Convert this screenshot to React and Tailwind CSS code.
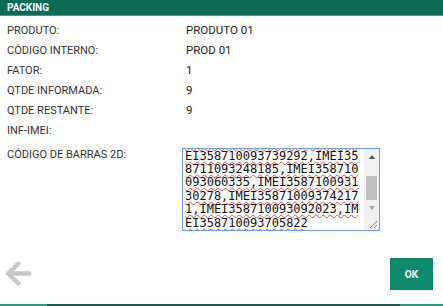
import React, { useEffect, useRef } from 'react';
import { FaArrowLeft } from 'react-icons/fa';

// ============================================
// PACKING DIALOG
// ============================================

const rows = [
  { label: 'PRODUTO:', value: 'PRODUTO 01' },
  { label: 'CÓDIGO INTERNO:', value: 'PROD 01' },
  { label: 'FATOR:', value: '1' },
  { label: 'QTDE INFORMADA:', value: '9' },
  { label: 'QTDE RESTANTE:', value: '9' },
  { label: 'INF-IMEI:', value: '' },
];

const barcodes =
  '8710093516240,IMEI358710093221097,IMEI358710093670354,IMEI358710093415862,IMEI358710093118803,IM' +
  'EI358710093739292,IMEI358711093248185,IMEI358710093060335,IMEI358710093130278,IMEI358710093742171,IMEI358710093092023,IMEI358710093705822\n';

// ============================================
// SCROLL COLUMN (classic scrollbar + resize grip)
// ============================================
const ScrollColumn = () => (
  <div className="w-[15px] h-full flex flex-col bg-[#f1f1f1]">
    <div className="h-[15px] flex items-center justify-center">
      <div className="w-0 h-0 border-x-[3.5px] border-x-transparent border-b-[4px] border-b-[#505050]" />
    </div>
    <div className="flex-1 px-[2px] pt-[12px]">
      <div className="h-[24px] bg-[#c1c1c1]" />
    </div>
    <div className="h-[15px] flex items-center justify-center">
      <div className="w-0 h-0 border-x-[3.5px] border-x-transparent border-t-[4px] border-t-[#a3a3a3]" />
    </div>
    <div className="h-[15px] flex items-end justify-end">
      <svg width="15" height="15" viewBox="0 0 15 15">
        <path d="M13 6 L6 13 M13 10 L10 13" stroke="#8a8a8a" strokeWidth="1" />
      </svg>
    </div>
  </div>
);

const App = () => {
  const areaRef = useRef(null);

  useEffect(() => {
    // keep the textarea scrolled to the same place as in the app
    if (areaRef.current) areaRef.current.scrollTop = 55;
  }, []);

  return (
    <div className="w-[443px] h-[306px] flex flex-col bg-white font-['Roboto',sans-serif] text-[#222]">
      {/* Header */}
      <div className="h-[16px] bg-[#0b6b55] border-b border-[#3f9a82] pl-[7px] flex items-center">
        <span className="text-[10px] font-bold text-white leading-none">PACKING</span>
      </div>

      {/* Body */}
      <div className="flex-1 pt-[5px] pl-[7px]">
        {rows.map((row) => (
          <div key={row.label} className="grid grid-cols-[175px_1fr] h-[20px] items-center">
            <span className="text-[11px] text-[#333]">{row.label}</span>
            <span className="pl-[4px] text-[11.5px] text-[#222]">{row.value}</span>
          </div>
        ))}

        <div className="grid grid-cols-[175px_1fr] mt-[7px]">
          <span className="text-[11px] leading-[13px] text-[#333]">CÓDIGO DE BARRAS 2D:</span>
          <div className="w-[198px] h-[83px] flex border border-[#6f9fe0] bg-white">
            <textarea
              ref={areaRef}
              readOnly
              value={barcodes}
              className="w-[181px] h-full resize-none overflow-hidden outline-none px-[2px] py-[2px] font-['DejaVu_Sans_Mono',monospace] text-[12px] leading-[13.4px] text-[#111] underline decoration-wavy decoration-[#e05050] decoration-1"
            />
            <ScrollColumn />
          </div>
        </div>
      </div>

      {/* Footer */}
      <div className="h-[52px] flex items-start justify-between pl-[5px] pr-[10px] pt-[6px]">
        <FaArrowLeft className="text-[#c8c8c8] w-[27px] h-[29px] mt-[1px]" />
        <button className="w-[43px] h-[32px] bg-[#0e8a6d] text-white text-[10px] font-bold">OK</button>
      </div>

      {/* Bottom strip */}
      <div className="h-[2px] flex">
        <div className="w-[47px] bg-[#2a9a80]" />
        <div className="flex-1 bg-[#1d5a4c]" />
        <div className="w-[43px] bg-[#2a9a80]" />
      </div>
    </div>
  );
};

export default App;
